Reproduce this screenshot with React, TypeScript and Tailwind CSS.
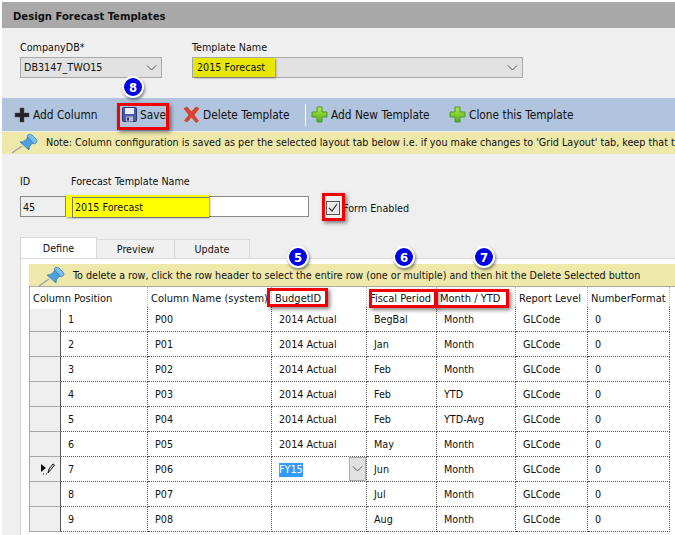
import React from 'react';

function BlackPlus() {
  return (
    <svg width="16" height="16" viewBox="0 0 16 16" className="shrink-0">
      <path d="M6 1h4v5h5v4h-5v5H6v-5H1V6h5z" fill="#222" stroke="#555" strokeWidth="0.5" />
    </svg>
  );
}

function GreenPlus() {
  return (
    <svg width="17" height="17" viewBox="0 0 17 17" className="shrink-0">
      <defs>
        <linearGradient id="gp" x1="0" y1="0" x2="0" y2="1">
          <stop offset="0" stopColor="#b4ec3c" />
          <stop offset="1" stopColor="#4fae1e" />
        </linearGradient>
      </defs>
      <path d="M6 1h5v5h5v5h-5v5H6v-5H1V6h5z" fill="url(#gp)" stroke="#4a9a2a" strokeWidth="1" />
    </svg>
  );
}

function RedX() {
  return (
    <svg width="17" height="17" viewBox="0 0 17 17" className="shrink-0">
      <path d="M1 2.5 4 1l4.500 5L13 1l3 1.500-5 6.500 4.500 6-2.500 1.500-4.500-5.500L4 16l-2.500-1.500L6 9z" fill="#e2402a" stroke="#b5301e" strokeWidth="0.6" />
    </svg>
  );
}

function Floppy() {
  return (
    <svg width="15" height="15" viewBox="0 0 15 15" className="shrink-0">
      <rect x="0.5" y="0.5" width="14" height="14" rx="1" fill="#4a5aa8" stroke="#2c3570" />
      <rect x="3" y="1" width="9" height="6" fill="#e8ecf6" />
      <rect x="4" y="9.5" width="7" height="5" fill="#b8bfd8" />
      <rect x="5" y="10.5" width="2" height="3" fill="#2c3570" />
    </svg>
  );
}

function Pin() {
  return (
    <svg width="28" height="21" viewBox="0 0 28 21" className="shrink-0">
      <path d="M1 20 11 13" stroke="#9aa3ad" strokeWidth="1.5" />
      <path d="M9 9c4 0 6-2 8-5l5 6c-3 2-4 4-4 7z" fill="#4f9fe0" stroke="#2b74b8" strokeWidth="0.7" />
      <path d="M16 3c1-2 3-2 5-1l4 4c1.500 2 1 4-2 5z" fill="#7cc0f0" stroke="#2b74b8" strokeWidth="0.7" />
    </svg>
  );
}

function Chevron() {
  return (
    <svg width="11" height="6" viewBox="0 0 11 6">
      <path d="M1 .5l4.500 4.500L10 .5" fill="none" stroke="#555" strokeWidth="1" />
    </svg>
  );
}

function Badge({ n, className }: { n: number; className: string }) {
  return (
    <div className={`absolute w-[22px] h-[22px] rounded-full bg-[#0000e6] border-[2px] border-white shadow-[1px_2px_3px_rgba(0,0,0,0.45)] flex items-center justify-center text-white font-bold text-[13px] leading-none ${className}`}>
      {n}
    </div>
  );
}

function RedBox({ className }: { className: string }) {
  return <div className={`absolute border-[3px] border-[#f00000] shadow-[2px_2px_4px_rgba(0,0,0,0.5)] ${className}`} />;
}

function ToolButton({ icon, label, className }: { icon: React.ReactNode; label: string; className?: string }) {
  return (
    <div className={`flex items-center gap-[3px] ${className ?? ''}`}>
      {icon}
      <span className="pt-[2px]">{label}</span>
    </div>
  );
}

const gridCols = 'grid grid-cols-[31px_87px_124px_95px_70px_79px_72px_82px]';

const rows = [
  ['1', 'P00', '2014 Actual', 'BegBal', 'Month', 'GLCode', '0'],
  ['2', 'P01', '2014 Actual', 'Jan', 'Month', 'GLCode', '0'],
  ['3', 'P02', '2014 Actual', 'Feb', 'Month', 'GLCode', '0'],
  ['4', 'P03', '2014 Actual', 'Feb', 'YTD', 'GLCode', '0'],
  ['5', 'P04', '2014 Actual', 'Feb', 'YTD-Avg', 'GLCode', '0'],
  ['6', 'P05', '2014 Actual', 'May', 'Month', 'GLCode', '0'],
  ['7', 'P06', 'FY15', 'Jun', 'Month', 'GLCode', '0'],
  ['8', 'P07', '', 'Jul', 'Month', 'GLCode', '0'],
  ['9', 'P08', '', 'Aug', 'Month', 'GLCode', '0'],
];

const headers = ['Column Name (system)', 'BudgetID', 'Fiscal Period', 'Month / YTD', 'Report Level', 'NumberFormat'];

export default function App() {
  return (
    <div className="relative w-[675px] h-[535px] overflow-hidden bg-white pt-[2px] pl-[2px] text-[10.7px] leading-none text-[#111] font-['DejaVu_Sans_Condensed','DejaVu_Sans',sans-serif] font-stretch-condensed">
      <div className="h-[533px] bg-[#efefef]">
        <div className="h-[26px] bg-[#a9a9a9] flex items-center pl-[11px] pt-[3px] font-bold text-[11.2px] text-[#111]">Design Forecast Templates</div>

        {/* Top filters */}
        <div className="h-[70px] pl-[18px] pt-[14px] flex gap-[30px]">
          <div className="w-[142px]">
            <div className="h-[15px] pt-[1px]">CompanyDB*</div>
            <div className="h-[21px] border border-[#aaa] bg-[#e1e1e1] flex items-center justify-between pl-[3px] pr-[4px] pt-[1px]">
              <span>DB3147_TWO15</span>
              <Chevron />
            </div>
          </div>
          <div className="w-[331px]">
            <div className="h-[15px] pt-[1px]">Template Name</div>
            <div className="h-[21px] border border-[#aaa] bg-[#e1e1e1] flex items-center justify-end pr-[4px]">
              <Chevron />
            </div>
          </div>
        </div>

        {/* Toolbar */}
        <div className="h-[33px] bg-[#b0c4de] flex items-center pl-[12px] text-[11.8px]">
          <ToolButton icon={<BlackPlus />} label="Add Column" className="w-[108px]" />
          <ToolButton icon={<Floppy />} label="Save" className="w-[61px]" />
          <ToolButton icon={<RedX />} label="Delete Template" className="w-[122px]" />
          <div className="w-px h-[22px] bg-white mr-[5px]" />
          <ToolButton icon={<GreenPlus />} label="Add New Template" className="w-[138px]" />
          <ToolButton icon={<GreenPlus />} label="Clone this Template" />
        </div>

        {/* Note */}
        <div className="mt-[1px] h-[22px] bg-[#eee8aa] flex items-center pl-[9px] pt-[1px] gap-[7px] whitespace-nowrap overflow-hidden">
          <Pin />
          <span>Note: Column configuration is saved as per the selected layout tab below i.e. if you make changes to 'Grid Layout' tab, keep that tab selected</span>
        </div>

        {/* Template form */}
        <div className="h-[83px] pl-[18px] pt-[23px]">
          <div className="flex h-[19px]">
            <div className="w-[51px]">ID</div>
            <div>Forecast Template Name</div>
          </div>
          <div className="flex items-center">
            <div className="w-[46px] h-[21px] border border-[#888] bg-[#efefef] flex items-center pl-[2px] pt-[3px]">45</div>
            <div className="w-[243px] h-[21px] border border-[#888] border-l-0 bg-white" />
            <div className="ml-[17px] mt-[2px] w-[14px] h-[14px] border border-[#555] bg-[#e8e8e8] flex items-center justify-center">
              <svg width="10" height="10" viewBox="0 0 10 10">
                <path d="M1 5l3 3 5-7" fill="none" stroke="#333" strokeWidth="1.2" />
              </svg>
            </div>
            <span className="ml-[3px] mt-[5px]">Form Enabled</span>
          </div>
        </div>

        {/* Tabs */}
        <div className="ml-[18px] flex items-end h-[21px]">
          <div className="w-[77px] h-[21px] bg-white border border-b-0 border-[#d9d9d9] flex items-center justify-center pt-[2px]">Define</div>
          <div className="w-[78px] h-[19px] bg-[#f0f0f0] border border-b-0 border-l-0 border-[#d9d9d9] flex items-center justify-center pt-[3px]">Preview</div>
          <div className="w-[75px] h-[19px] bg-[#f0f0f0] border border-b-0 border-l-0 border-[#d9d9d9] flex items-center justify-center pt-[3px]">Update</div>
        </div>

        {/* Tab pane */}
        <div className="ml-[18px] bg-white border-l border-t border-[#d9d9d9] h-[280px] pt-[5px] pl-[8px]">
          <div className="h-[22px] bg-[#eee8aa] flex items-center pl-[9px] pt-[3px] gap-[7px] whitespace-nowrap text-[10.65px]">
            <Pin />
            <span>To delete a row, click the row header to select the entire row (one or multiple) and then hit the Delete Selected button</span>
          </div>
          <div className="border-t border-l border-[#aaa]">
            <div className={`${gridCols} h-[20px] items-center text-[11px]`}>
              <div className="col-span-2 h-full flex items-center pl-[3px] pt-[2px] border-r border-dotted border-[#bbb] gap-[3px]">
                <span>Column</span>
                <span>Position</span>
              </div>
              {headers.map((h) => (
                <div key={h} className="h-full flex items-center pl-[3px] pt-[2px] border-r border-dotted border-[#bbb] overflow-hidden whitespace-nowrap">
                  {h}
                </div>
              ))}
            </div>
            {rows.map((r) => (
              <div key={r[0]} className={`${gridCols} h-[25px]`}>
                <div className={`bg-[#efefef] border-r border-dotted border-[#555] border-b border-b-[#aaa] border-solid flex items-center justify-center pl-[6px] ${r[0] === '1' ? 'mt-[2px]' : ''}`}>
                  {r[0] === '7' && (
                    <svg width="14" height="12" viewBox="0 0 14 12">
                      <path d="M0 1l5 4-5 4z" fill="#111" />
                      <path d="M7 10l1-4 4-5 1.500 1-4 5zM2 11h1M5 11h1" fill="none" stroke="#111" strokeWidth="1" />
                    </svg>
                  )}
                </div>
                {r.map((c, i) => (
                  <div key={i} className="relative border-r border-b border-dotted border-[#555] flex items-center pl-[7px] pt-[2px] whitespace-nowrap overflow-hidden">
                    {c === 'FY15' ? (
                      <>
                        <span className="bg-[#3399ff] text-white h-[14px] flex items-center">{c}</span>
                        <div className="absolute right-0 top-0 w-[17px] h-full bg-[#e1e1e1] border border-[#aaa] flex items-center justify-center">
                          <Chevron />
                        </div>
                      </>
                    ) : (
                      c
                    )}
                  </div>
                ))}
              </div>
            ))}
          </div>
        </div>
      </div>

      {/* Annotations laid over the screen */}
      <div className="absolute left-[193px] top-[58px] w-[82px] h-[19px] bg-[#e6e600] shadow-[1px_1px_2px_rgba(0,0,0,0.4)] flex items-center pl-[4px] pt-[1px]">2015 Forecast</div>
      <div className="absolute left-[66px] top-[195px] w-[143px] h-[22px] bg-[#ffff00] shadow-[1px_1px_2px_rgba(0,0,0,0.4)] pl-[6px] pt-[2px]">
        <div className="h-[21px] border-l border-b border-t border-[#777] flex items-center pl-[2px] pt-[2px]">2015 Forecast</div>
      </div>
      <RedBox className="left-[117px] top-[103px] w-[52px] h-[27px]" />
      <RedBox className="left-[322px] top-[193px] w-[23px] h-[28px]" />
      <RedBox className="left-[267px] top-[288px] w-[61px] h-[19px]" />
      <RedBox className="left-[369px] top-[289px] w-[68px] h-[19px]" />
      <RedBox className="left-[435px] top-[289px] w-[74px] h-[19px]" />
      <Badge n={8} className="left-[122px] top-[76px]" />
      <Badge n={5} className="left-[287px] top-[246px]" />
      <Badge n={6} className="left-[393px] top-[246px]" />
      <Badge n={7} className="left-[473px] top-[246px]" />
    </div>
  );
}
